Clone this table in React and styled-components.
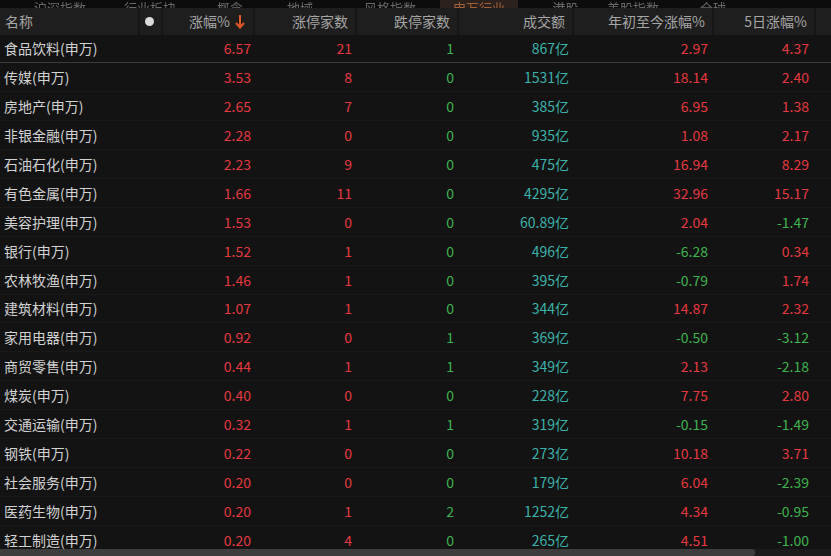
import React from "react";
import styled, { createGlobalStyle } from "styled-components";

const Global = createGlobalStyle`
  html, body { margin: 0; padding: 0; background: #131313; }
  body { font-family: "Noto Sans CJK SC", "Noto Sans", sans-serif; }
  #root { width: 831px; height: 556px; overflow: hidden; }
`;

const COLS = "140px 23px 92px 102px 102px 115px 140px 102px 1fr";

const Page = styled.div`
  width: 831px;
  height: 556px;
  display: flex;
  flex-direction: column;
  background: #131313;
  overflow: hidden;
`;

const TopStrip = styled.div`
  height: 8px;
  flex: none;
  background: #0c0c0c;
  display: flex;
  align-items: flex-end;
  overflow: hidden;
  padding-left: 20px;
  gap: 0;
`;

const StripTab = styled.div`
  height: 8px;
  width: ${(p) => p.$w}px;
  margin-left: ${(p) => p.$ml}px;
  background: ${(p) => (p.$active ? "#2b221d" : "transparent")};
  display: flex;
  align-items: flex-end;
  justify-content: center;
  overflow: hidden;
`;

const StripText = styled.span`
  font-size: 13px;
  line-height: 13px;
  margin-bottom: -6px;
  color: ${(p) => p.$c || "#6a6a6a"};
  white-space: nowrap;
  filter: blur(0.6px);
`;

const HeaderRow = styled.div`
  height: 26.5px;
  flex: none;
  display: grid;
  grid-template-columns: ${COLS};
  background: #1e1e1e;
`;

const HeadCell = styled.div`
  display: flex;
  align-items: center;
  justify-content: ${(p) => (p.$left ? "flex-start" : p.$center ? "center" : "flex-end")};
  padding: ${(p) => (p.$left ? "0 0 0 5px" : p.$center ? "0" : "0 7px 0 0")};
  border-right: ${(p) => (p.$last ? "none" : "2px solid #161616")};
  color: #a6a6a6;
  font-size: 14px;
  white-space: nowrap;
  gap: 5px;
`;

const Dot = styled.span`
  width: 9px;
  height: 9px;
  border-radius: 50%;
  background: #dcdcdc;
  margin-left: -2px;
`;

const Body = styled.div`
  flex: 1;
  overflow: hidden;
`;

const Row = styled.div`
  height: 28.9px;
  box-sizing: border-box;
  display: grid;
  grid-template-columns: ${COLS};
  border-bottom: 1px solid ${(p) => (p.$first ? "#3c3c3c" : "#191919")};
`;

const Cell = styled.div`
  display: flex;
  align-items: center;
  justify-content: ${(p) => (p.$left ? "flex-start" : "flex-end")};
  padding: ${(p) => (p.$left ? "0 0 0 4px" : `0 ${p.$pr || 5}px 0 0`)};
  font-size: 14px;
  white-space: nowrap;
  color: ${(p) => p.$c || "#d2d2d2"};
`;

const ScrollBar = styled.div`
  height: 7px;
  flex: none;
  background: #1b1b1b;
  display: flex;
`;

const Thumb = styled.div`
  width: 755px;
  background: #3d3d3d;
  border-radius: 0 3px 3px 0;
`;

const RED = "#e33a40";
const GREEN = "#3fb34f";
const TEAL = "#3cb2aa";

const data = [
  ["食品饮料(申万)", "6.57", "21", "1", "867亿", "2.97", "4.37"],
  ["传媒(申万)", "3.53", "8", "0", "1531亿", "18.14", "2.40"],
  ["房地产(申万)", "2.65", "7", "0", "385亿", "6.95", "1.38"],
  ["非银金融(申万)", "2.28", "0", "0", "935亿", "1.08", "2.17"],
  ["石油石化(申万)", "2.23", "9", "0", "475亿", "16.94", "8.29"],
  ["有色金属(申万)", "1.66", "11", "0", "4295亿", "32.96", "15.17"],
  ["美容护理(申万)", "1.53", "0", "0", "60.89亿", "2.04", "-1.47"],
  ["银行(申万)", "1.52", "1", "0", "496亿", "-6.28", "0.34"],
  ["农林牧渔(申万)", "1.46", "1", "0", "395亿", "-0.79", "1.74"],
  ["建筑材料(申万)", "1.07", "1", "0", "344亿", "14.87", "2.32"],
  ["家用电器(申万)", "0.92", "0", "1", "369亿", "-0.50", "-3.12"],
  ["商贸零售(申万)", "0.44", "1", "1", "349亿", "2.13", "-2.18"],
  ["煤炭(申万)", "0.40", "0", "0", "228亿", "7.75", "2.80"],
  ["交通运输(申万)", "0.32", "1", "1", "319亿", "-0.15", "-1.49"],
  ["钢铁(申万)", "0.22", "0", "0", "273亿", "10.18", "3.71"],
  ["社会服务(申万)", "0.20", "0", "0", "179亿", "6.04", "-2.39"],
  ["医药生物(申万)", "0.20", "1", "2", "1252亿", "4.34", "-0.95"],
  ["轻工制造(申万)", "0.20", "4", "0", "265亿", "4.51", "-1.00"],
];

const signColor = (v) => (v.startsWith("-") ? GREEN : RED);

const DownArrow = () => (
  <svg width="10" height="15" viewBox="0 0 10 15">
    <path d="M5 1 V13" stroke="#e2582c" strokeWidth="2" fill="none" />
    <path d="M1 9 L5 13.5 L9 9" stroke="#e2582c" strokeWidth="2" fill="none" />
  </svg>
);

const tabs = [
  { ml: 10, w: 60, t: "沪深指数" },
  { ml: 30, w: 60, t: "行业板块" },
  { ml: 30, w: 40, t: "概念" },
  { ml: 30, w: 40, t: "地域" },
  { ml: 40, w: 60, t: "风格指数" },
  { ml: 20, w: 78, t: "申万行业", active: true },
  { ml: 25, w: 45, t: "港股" },
  { ml: 15, w: 60, t: "美股指数" },
  { ml: 20, w: 60, t: "全球" },
];

export default function App() {
  return (
    <>
      <Global />
      <Page>
        <TopStrip>
          {tabs.map((t, i) => (
            <StripTab key={i} $ml={t.ml} $w={t.w} $active={t.active}>
              <StripText $c={t.active ? "#a0603a" : undefined}>{t.t}</StripText>
            </StripTab>
          ))}
        </TopStrip>
        <HeaderRow>
          <HeadCell $left>名称</HeadCell>
          <HeadCell $center>
            <Dot />
          </HeadCell>
          <HeadCell style={{ paddingRight: 8 }}>
            涨幅%
            <DownArrow />
          </HeadCell>
          <HeadCell>涨停家数</HeadCell>
          <HeadCell>跌停家数</HeadCell>
          <HeadCell>成交额</HeadCell>
          <HeadCell>年初至今涨幅%</HeadCell>
          <HeadCell>5日涨幅%</HeadCell>
          <HeadCell $last />
        </HeaderRow>
        <Body>
          {data.map((r, i) => (
            <Row key={r[0]} $first={i === 0}>
              <Cell $left>{r[0]}</Cell>
              <Cell />
              <Cell $c={RED} $pr={4}>{r[1]}</Cell>
              <Cell $c={RED} $pr={5}>{r[2]}</Cell>
              <Cell $c={GREEN} $pr={5}>{r[3]}</Cell>
              <Cell $c={TEAL} $pr={5}>{r[4]}</Cell>
              <Cell $c={signColor(r[5])} $pr={6}>{r[5]}</Cell>
              <Cell $c={signColor(r[6])} $pr={7}>{r[6]}</Cell>
              <Cell />
            </Row>
          ))}
        </Body>
        <ScrollBar>
          <Thumb />
        </ScrollBar>
      </Page>
    </>
  );
}
